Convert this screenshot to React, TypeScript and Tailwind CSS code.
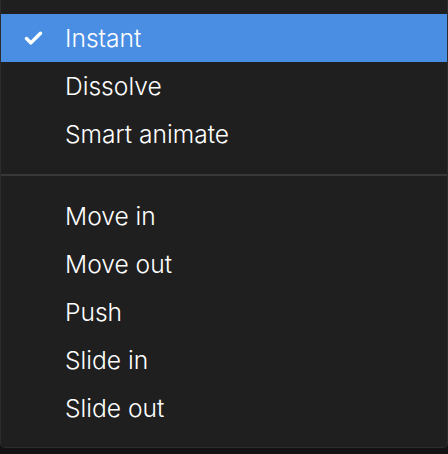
import { Check } from "lucide-react"

const groups = [
  ["Instant", "Dissolve", "Smart animate"],
  ["Move in", "Move out", "Push", "Slide in", "Slide out"],
]

function Item({ label, active }: { label: string; active?: boolean }) {
  return (
    <div className={`flex h-12 items-center ${active ? "bg-[#4a8ee4]" : ""}`}>
      <div className="flex w-[64px] items-center justify-start pl-[22px]">
        {active && <Check size={21} strokeWidth={4} className="text-white" />}
      </div>
      <span className="text-[24.6px] font-light leading-none text-white">{label}</span>
    </div>
  )
}

export default function App() {
  return (
    <div className="h-[454px] w-[448px] bg-[#121212] font-['Inter',sans-serif]">
      <div className="h-[448px] rounded-b-[5px] border border-t-0 border-[#2c2c2c] bg-[#1f1f1f] pt-[14px]">
        <div>
          {groups[0].map((l, i) => (
            <Item key={l} label={l} active={i === 0} />
          ))}
        </div>
        <div className="my-4 h-[2px] bg-[#383838]" />
        <div>
          {groups[1].map((l) => (
            <Item key={l} label={l} />
          ))}
        </div>
      </div>
    </div>
  )
}
